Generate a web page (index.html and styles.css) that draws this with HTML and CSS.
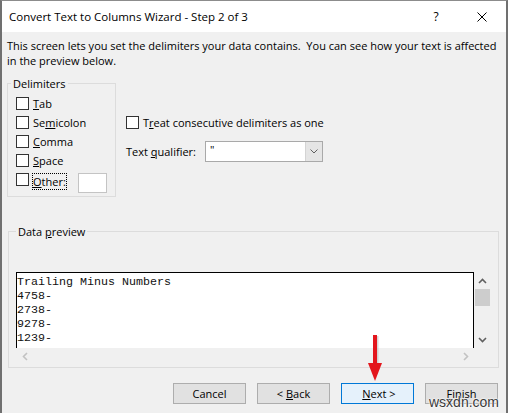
FILE: index.html
```html
<!DOCTYPE html>
<html lang="en">
<head>
<meta charset="UTF-8">
<meta name="viewport" content="width=device-width, initial-scale=1.0">
<title>Convert Text to Columns Wizard - Step 2 of 3</title>
<link rel="stylesheet" href="styles.css">
</head>
<body>
<div class="window">
    <div class="titlebar">
        <span class="title">Convert Text to Columns Wizard - Step 2 of 3</span>
        <span class="title-btn">?</span>
        <span class="title-btn">
            <svg width="10" height="10" viewBox="0 0 10 10"><path d="M0.5 0.5L9.5 9.5M9.5 0.5L0.5 9.5" stroke="#000" stroke-width="1"/></svg>
        </span>
    </div>

    <div class="content">
        <p class="intro">This screen lets you set the delimiters your data contains.&nbsp; You can see how your text is affected<br>in the preview below.</p>

        <div class="options">
            <fieldset class="group delims">
                <legend>Delimiters</legend>
                <div class="check-row"><span class="box"></span><span><u>T</u>ab</span></div>
                <div class="check-row"><span class="box"></span><span>Se<u>m</u>icolon</span></div>
                <div class="check-row"><span class="box"></span><span><u>C</u>omma</span></div>
                <div class="check-row"><span class="box"></span><span><u>S</u>pace</span></div>
                <div class="check-row other-row">
                    <span class="box"></span>
                    <span class="focus"><u>O</u>ther:</span>
                    <span class="other-input"></span>
                </div>
            </fieldset>

            <div class="side">
                <div class="check-row treat"><span class="box"></span><span>T<u>r</u>eat consecutive delimiters as one</span></div>
                <div class="qualifier">
                    <span class="q-label">Text <u>q</u>ualifier:</span>
                    <div class="combo">
                        <span class="combo-value">"</span>
                        <span class="combo-btn">
                            <svg width="8" height="5" viewBox="0 0 8 5"><path d="M0.5 0.5L4 4L7.5 0.5" fill="none" stroke="#606060" stroke-width="1"/></svg>
                        </span>
                    </div>
                </div>
            </div>
        </div>

        <fieldset class="group preview">
            <legend>Data <u>p</u>review</legend>
            <div class="preview-grid">
<pre class="preview-text">Trailing Minus Numbers
4758-
2738-
9278-
1239-</pre>
                <div class="vscroll">
                    <span class="sb-arrow"><svg width="9" height="6" viewBox="0 0 9 6"><path d="M1 5L4.5 1.5L8 5" fill="none" stroke="#606060" stroke-width="1.6"/></svg></span>
                    <span class="thumb"></span>
                    <span class="sb-fill"></span>
                    <span class="sb-arrow"><svg width="9" height="6" viewBox="0 0 9 6"><path d="M1 1L4.5 4.5L8 1" fill="none" stroke="#606060" stroke-width="1.6"/></svg></span>
                </div>
                <div class="hscroll">
                    <span class="sb-arrow"><svg width="6" height="9" viewBox="0 0 6 9"><path d="M5 1L1.5 4.5L5 8" fill="none" stroke="#c2c2c2" stroke-width="1.6"/></svg></span>
                    <span class="sb-arrow"><svg width="6" height="9" viewBox="0 0 6 9"><path d="M1 1L4.5 4.5L1 8" fill="none" stroke="#c2c2c2" stroke-width="1.6"/></svg></span>
                </div>
            </div>
        </fieldset>

        <div class="buttons">
            <button>Cancel</button>
            <button>&lt; <u>B</u>ack</button>
            <button class="default">&nbsp;<u>N</u>ext &gt;</button>
            <button><u>F</u>inish</button>
        </div>
    </div>

    <!-- red callout arrow over the Next button -->
    <svg class="callout" width="18" height="50" viewBox="0 0 18 50">
        <rect x="7.5" y="2" width="4" height="30" fill="#b0b0b0" opacity="0.5"/>
        <rect x="6" y="1" width="4" height="30" fill="#e3161d"/>
        <polygon points="1,29 15,29 8,47" fill="#e3161d"/>
    </svg>

    <span class="watermark">wsxdn.com</span>
</div>
</body>
</html>
```

FILE: styles.css
```css
body {
    margin: 0;
    background: #fff;
    font-family: "Open Sans", "Noto Sans", sans-serif;
    font-size: 11px;
    color: #000;
}
.window {
    position: relative;
    width: 508px;
    height: 413px;
    box-sizing: border-box;
    border-top: 1px solid #8c8c8c;
    border-left: 2px solid #707070;
    border-right: 2px solid #707070;
    background: #f0f0f0;
    overflow: hidden;
}
.titlebar {
    height: 31px;
    background: #fff;
    display: flex;
    align-items: center;
    padding-right: 1px;
    font-size: 11.5px;
}
.title {
    flex: 1;
    padding-left: 7px;
}
.title-btn {
    width: 46px;
    height: 31px;
    display: flex;
    align-items: center;
    justify-content: center;
    font-size: 12px;
}
.content {
    padding: 6px 7px 0 5px;
}
.intro {
    margin: 0;
    line-height: 15px;
}

/* group boxes */
.options {
    display: flex;
    margin-top: 8px;
}
fieldset.group {
    margin: 0;
    min-width: 0;
    border: 1px solid #dcdcdc;
    box-sizing: border-box;
}
legend {
    padding: 0 2px;
    line-height: 15px;
}
.delims {
    width: 109px;
    padding: 3px 0 3px 3px;
}
.check-row {
    display: flex;
    align-items: center;
    height: 19px;
    margin-left: 5px;
}
.box {
    width: 13px;
    height: 13px;
    box-sizing: border-box;
    border: 1px solid #333;
    background: #fff;
    margin-right: 4px;
    flex: none;
}
.other-row {
    height: 23px;
    align-items: flex-start;
}
.other-row .box {
    margin-top: 3px;
}
.focus {
    margin-top: 4px;
    line-height: 15px;
    outline: 1px dotted #000;
}
.other-input {
    margin: 3px 8px 0 auto;
    width: 29px;
    height: 20px;
    box-sizing: border-box;
    border: 1px solid #c4c4c4;
    background: #fff;
}

.side {
    margin-left: 10px;
}
.treat {
    margin: 37px 0 0 0;
}
.qualifier {
    display: flex;
    align-items: center;
    margin-top: 9px;
}
.q-label {
    width: 79px;
}
.combo {
    display: flex;
    width: 118px;
    height: 21px;
    box-sizing: border-box;
    border: 1px solid #a9a9a9;
    background: #fff;
}
.combo-value {
    flex: 1;
    padding-left: 4px;
    line-height: 15px;
}
.combo-btn {
    width: 16px;
    display: flex;
    align-items: center;
    justify-content: center;
    background: #e5e5e5;
    border-left: 1px solid #d4d4d4;
}

/* data preview */
fieldset.preview {
    width: 491px;
    margin: 27px 0 0 1px;
    padding: 33px 7px 3px 7px;
}
.preview-grid {
    display: grid;
    grid-template-columns: 458px 17px;
    grid-template-rows: 76px 16px;
}
.preview-text {
    margin: 0;
    padding: 2px 0 0 0;
    background: #fff;
    border: 1px solid #000;
    border-bottom: none;
    font-family: "Liberation Mono", "Courier New", monospace;
    font-size: 11.67px;
    line-height: 14px;
    color: #111;
    overflow: hidden;
}
.vscroll {
    display: flex;
    flex-direction: column;
}
.sb-arrow {
    height: 17px;
    display: flex;
    align-items: center;
    justify-content: center;
}
.thumb {
    height: 17px;
    width: 15px;
    margin-left: 1px;
    background: #cdcdcd;
}
.sb-fill {
    flex: 1;
}
.hscroll {
    display: flex;
    justify-content: space-between;
}
.hscroll .sb-arrow {
    width: 17px;
    height: 16px;
}

/* buttons */
.buttons {
    display: flex;
    justify-content: flex-end;
    gap: 11px;
    margin-top: 15px;
    padding-right: 1px;
}
button {
    width: 73px;
    height: 21px;
    padding: 0;
    font-family: inherit;
    font-size: 11px;
    color: #000;
    background: #e1e1e1;
    border: 1px solid #adadad;
    border-radius: 0;
}
button.default {
    background: #e5f1fb;
    border-color: #0078d7;
}

.callout {
    position: absolute;
    left: 365px;
    top: 333px;
}
.watermark {
    position: absolute;
    left: 427px;
    top: 393px;
    font-family: "Liberation Sans", Arial, sans-serif;
    font-size: 14px;
    color: #3a3a3a;
    text-shadow: 0 0 2px #fff, 0 0 2px #fff, 0 0 1px #fff;
}
```
